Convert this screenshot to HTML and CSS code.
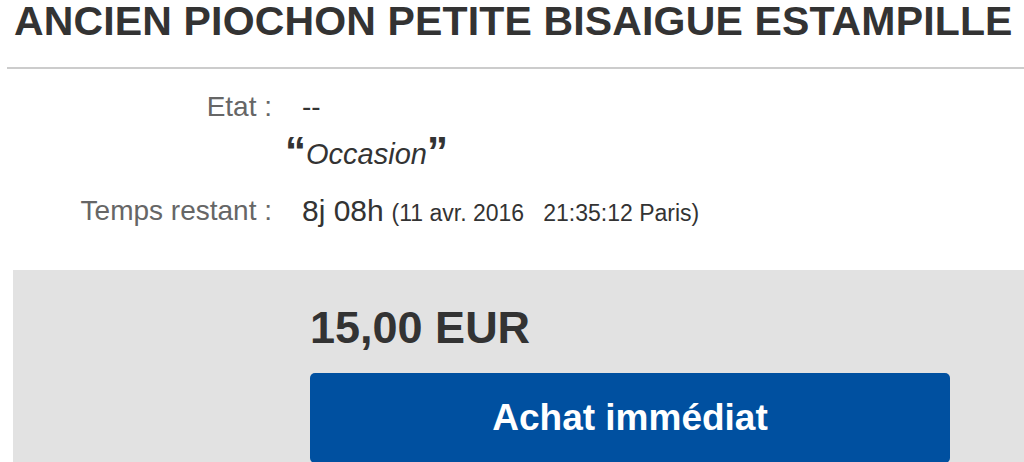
FILE: index.html
```html
<!doctype html>
<html lang="fr">
<head>
    <meta charset="utf-8">
    <meta name="viewport" content="width=device-width, initial-scale=1">
    <title>Ancien piochon petite bisaigue estampille</title>
    <link rel="stylesheet" href="styles.css">
</head>
<body>
<div class="item">
    <h1 class="item-title">ANCIEN PIOCHON PETITE BISAIGUE ESTAMPILLE</h1>
    <hr class="item-sep">

    <div class="info-row">
        <div class="info-label">Etat :</div>
        <div class="info-value">
            <div class="cond">--</div>
            <div class="cond-note">
                <span class="quote">&ldquo;</span><span class="cond-text">Occasion</span><span class="quote">&rdquo;</span>
            </div>
        </div>
    </div>

    <div class="info-row time-row">
        <div class="info-label">Temps restant :</div>
        <div class="info-value">
            <span class="time-left">8j 08h</span>
            <span class="time-end">(11 avr. 2016&nbsp;&nbsp;&nbsp;21:35:12 Paris)</span>
        </div>
    </div>

    <div class="buy-box">
        <div class="buy-inner">
            <div class="price">15,00 EUR</div>
            <a class="btn-buy" href="#">Achat immédiat</a>
        </div>
    </div>
</div>
</body>
</html>
```

FILE: styles.css
```css
body {
    margin: 0;
    font-family: "Liberation Sans", Arial, sans-serif;
    color: #333;
    background: #fff;
    overflow: hidden;
}

.item {
    padding-left: 7px;
}

.item-title {
    margin: 0;
    padding: 1px 0 0 7px;
    font-size: 41px;
    font-weight: bold;
    line-height: 41px;
    letter-spacing: 0.15px;
    white-space: nowrap;
    color: #333;
}

.item-sep {
    margin: 25px 0 0 0;
    border: 0;
    height: 2px;
    background: #ccc;
}

.info-row {
    display: flex;
    align-items: flex-start;
    margin-top: 22px;
}

.info-label {
    width: 265px;
    text-align: right;
    font-size: 28px;
    line-height: 32px;
    color: #666;
}

.info-value {
    padding-left: 30px;
    font-size: 28px;
    line-height: 32px;
    color: #333;
}

.cond-note {
    margin-left: -17px;
    margin-top: 15px;
    font-size: 29px;
}

.quote {
    font-size: 42px;
    font-weight: bold;
    vertical-align: top;
    line-height: 28px;
}

.cond-text {
    font-style: italic;
}

.time-row {
    margin-top: 25px;
}

.time-left {
    font-size: 30px;
}

.time-end {
    font-size: 23px;
}

.buy-box {
    margin: 41px 0 0 6px;
    height: 200px;
    background: #e2e2e2;
}

.buy-inner {
    padding: 33px 0 0 297px;
}

.price {
    font-size: 45px;
    font-weight: bold;
    line-height: 50px;
    color: #333;
}

.btn-buy {
    display: block;
    width: 640px;
    margin-top: 20px;
    padding: 23px 0;
    border-radius: 5px;
    background: #0050a0;
    color: #fff;
    text-align: center;
    text-decoration: none;
    font-size: 37px;
    font-weight: bold;
    line-height: 44px;
}
```
